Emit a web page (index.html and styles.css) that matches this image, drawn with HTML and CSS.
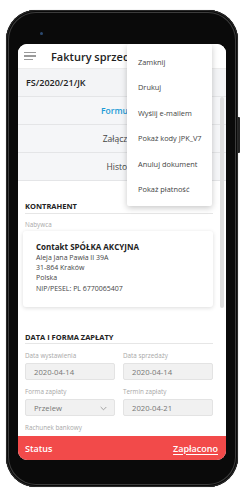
FILE: index.html
```html
<!DOCTYPE html>
<html lang="pl">
<head>
<meta charset="utf-8">
<link rel="stylesheet" href="styles.css">
</head>
<body>
<div class="phone">
  <div class="camera"></div>
  <div class="side-btn"></div>
  <div class="screen">
    <div class="header">
      <div class="burger"><span></span><span></span><span></span></div>
      <div class="title">Faktury sprzedaży</div>
    </div>
    <div class="docno">FS/2020/21/JK</div>
    <div class="tabs">
      <div class="tab active">Formularz</div>
      <div class="tab">Załączniki</div>
      <div class="tab">Historia</div>
    </div>
    <div class="content">
      <div class="sec-title">KONTRAHENT</div>
      <div class="label first">Nabywca</div>
      <div class="card">
        <div class="name">Contakt SPÓŁKA AKCYJNA</div>
        <div class="addr">Aleja Jana Pawła II 39A</div>
        <div class="addr">31-864 Kraków</div>
        <div class="addr">Polska</div>
        <div class="addr nip">NIP/PESEL: PL 6770065407</div>
      </div>
      <div class="sec-title sec2">DATA I FORMA ZAPŁATY</div>
      <div class="grid">
        <div class="field">
          <div class="label">Data wystawienia</div>
          <div class="input">2020-04-14</div>
        </div>
        <div class="field">
          <div class="label">Data sprzedaży</div>
          <div class="input">2020-04-14</div>
        </div>
        <div class="field">
          <div class="label">Forma zapłaty</div>
          <div class="input select">Przelew
            <svg class="chev" width="7" height="5" viewBox="0 0 7 5"><path d="M0.7 1 L3.5 3.8 L6.3 1" fill="none" stroke="#999" stroke-width="0.9"/></svg>
          </div>
        </div>
        <div class="field">
          <div class="label">Termin zapłaty</div>
          <div class="input">2020-04-21</div>
        </div>
      </div>
      <div class="label bank">Rachunek bankowy</div>
    </div>
    <div class="status">
      <span>Status</span>
      <span class="paid">Zapłacono</span>
    </div>
    <div class="scrollbar"></div>
    <div class="menu">
      <div class="item">Zamknij</div>
      <div class="item">Drukuj</div>
      <div class="item">Wyślij e-mailem</div>
      <div class="item">Pokaż kody JPK_V7</div>
      <div class="item">Anuluj dokument</div>
      <div class="item">Pokaż płatność</div>
    </div>
  </div>
</div>
</body>
</html>
```
FILE: styles.css
```css
* { box-sizing: border-box; }
html, body { margin: 0; padding: 0; }
body {
  width: 245px;
  height: 499px;
  background: #fff;
  overflow: hidden;
  font-family: "Open Sans", "Noto Sans", sans-serif;
}
.phone {
  position: relative;
  margin: 10px 0 0 6px;
  width: 232px;
  height: 477px;
  padding: 34px 12px 27px 12px;
  border-radius: 30px;
  background: #0a0a0a;
  box-shadow: inset 0 0 0 1px #2a2a2a, inset 0 0 0 2px #0a0a0a, inset 0 0 0 3px #3c3c3c, 0 0 1px rgba(0,0,0,0.4);
}
.camera {
  position: absolute;
  left: 34px;
  top: 22px;
  width: 3px;
  height: 3px;
  border-radius: 50%;
  background: #2c4a70;
}
.side-btn {
  position: absolute;
  right: -2px;
  top: 107px;
  width: 2px;
  height: 36px;
  background: #222;
  border-radius: 0 1px 1px 0;
}
.screen {
  position: relative;
  width: 208px;
  height: 416px;
  border-radius: 9px;
  background: #fff;
  overflow: hidden;
  display: flex;
  flex-direction: column;
}
.header {
  height: 25px;
  flex: none;
  display: flex;
  align-items: center;
  padding-left: 6px;
  background: #fff;
  border-bottom: 1px solid #ececec;
  white-space: nowrap;
}
.burger {
  width: 12px;
  display: flex;
  flex-direction: column;
  gap: 2.5px;
}
.burger span {
  display: block;
  height: 1.3px;
  background: #9a9a9a;
}
.burger span:nth-child(3) { width: 9px; }
.title {
  margin-left: 15px;
  width: 76px;
  overflow: hidden;
  font-size: 11px;
  font-weight: 600;
  color: #222;
}
.docno {
  height: 28px;
  flex: none;
  display: flex;
  align-items: center;
  padding-left: 8px;
  background: #f3f4f6;
  font-size: 9px;
  font-weight: 600;
  color: #222;
  border-bottom: 1px solid #e4e5e7;
}
.tabs { flex: none; }
.tab {
  height: 28px;
  display: flex;
  align-items: center;
  justify-content: center;
  background: #f5f6f8;
  border-bottom: 1px solid #e4e5e7;
  font-size: 8.5px;
  color: #444;
}
.tab.active { color: #1a9ad6; font-weight: 600; }
.content {
  flex: 1;
  overflow: hidden;
  padding: 0 13px 0 7px;
}
.sec-title {
  margin-top: 20px;
  line-height: 10px;
  padding-bottom: 2px;
  border-bottom: 1px solid #e6e6e6;
  font-size: 7.5px;
  font-weight: 700;
  color: #222;
}
.sec2 { margin-top: 25px; padding-bottom: 1px; }
.label {
  line-height: 8px;
  font-size: 6.3px;
  color: #a8a8a8;
}
.label.first { margin-top: 7px; }
.card {
  margin: 2px 0 0 -2px;
  padding: 10px 8px 13px 13px;
  background: #fff;
  border-radius: 3px;
  box-shadow: 0 1px 4px rgba(0,0,0,0.14);
}
.name {
  line-height: 12px;
  font-size: 8px;
  font-weight: 700;
  color: #222;
}
.addr {
  line-height: 10px;
  font-size: 7px;
  color: #444;
}
.nip { margin-top: 1px; }
.grid {
  margin-top: 8px;
  display: grid;
  grid-template-columns: 1fr 1fr;
  column-gap: 8px;
  row-gap: 8px;
}
.input {
  margin-top: 3px;
  height: 17px;
  display: flex;
  align-items: center;
  padding-left: 8px;
  background: #f1f1f1;
  border: 1px solid #e3e3e3;
  border-radius: 2px;
  font-size: 7.7px;
  color: #777;
}
.select { position: relative; }
.chev {
  position: absolute;
  right: 7px;
  top: 6px;
}
.label.bank { margin-top: 8px; }
.status {
  height: 24px;
  flex: none;
  display: flex;
  align-items: center;
  justify-content: space-between;
  padding: 0 8px 0 7px;
  background: #f24a4a;
  color: #fff;
  font-size: 9px;
  font-weight: 600;
}
.paid { text-decoration: underline; text-underline-offset: 1.5px; }
.scrollbar {
  position: absolute;
  right: 2px;
  top: 53px;
  width: 4px;
  height: 211px;
  border-radius: 2px;
  background: #dedede;
}
.menu {
  position: absolute;
  top: 0;
  left: 109px;
  width: 85px;
  padding: 5px 0 4px;
  background: #fff;
  border-radius: 2px;
  box-shadow: 0 2px 6px rgba(0,0,0,0.22);
}
.item {
  height: 25.5px;
  display: flex;
  align-items: center;
  padding-left: 11px;
  font-size: 7.4px;
  color: #444;
  white-space: nowrap;
}
```
